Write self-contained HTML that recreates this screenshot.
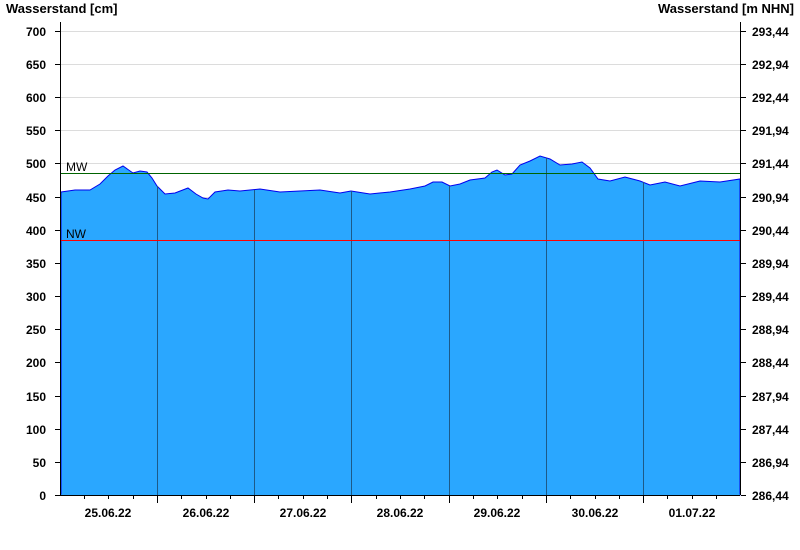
<!DOCTYPE html>
<html><head><style>body{margin:0;background:#fff}svg{display:block}text{font-family:"Liberation Sans",Arial,sans-serif;font-weight:bold;font-size:12px;fill:#000}</style></head><body>
<svg width="800" height="550" xmlns="http://www.w3.org/2000/svg">
<text x="6" y="13" style="font-size:13px">Wasserstand [cm]</text>
<text x="794" y="13" style="font-size:13px" text-anchor="end">Wasserstand [m NHN]</text>
<g stroke="#dcdcdc" stroke-width="1">
<line x1="61" x2="740" y1="31.5" y2="31.5"/><line x1="61" x2="740" y1="64.5" y2="64.5"/><line x1="61" x2="740" y1="97.5" y2="97.5"/><line x1="61" x2="740" y1="130.5" y2="130.5"/><line x1="61" x2="740" y1="163.5" y2="163.5"/><line x1="61" x2="740" y1="197.5" y2="197.5"/><line x1="61" x2="740" y1="230.5" y2="230.5"/>
</g>
<path d="M61,192 L75,190 L90,190 L100,184 L108,176 L115,170 L123,166 L133,173 L140,171 L147,172 L152,178 L157,186 L165,194 L175,193 L188,188 L196,194 L203,198 L208,199 L215,192 L228,190 L240,191 L260,189 L280,192 L300,191 L320,190 L340,193 L351,191 L370,194 L390,192 L410,189 L425,186 L433,182 L442,182 L450,186 L460,184 L470,180 L485,178 L492,172 L497,170 L505,175 L512,174 L520,165 L530,161 L540,156 L550,159 L560,165 L572,164 L582,162 L590,168 L598,179 L610,181 L625,177 L640,181 L650,185 L665,182 L680,186 L700,181 L720,182 L740,179 L740,495 L61,495 Z" fill="#2aa7ff" stroke="#0000ee" stroke-width="1"/>
<line x1="61" x2="740" y1="495" y2="495" stroke="#2aa7ff"/>
<g stroke="#1d5a87" stroke-width="1">
<line x1="157.5" x2="157.5" y1="186" y2="495"/><line x1="254.5" x2="254.5" y1="190" y2="495"/><line x1="351.5" x2="351.5" y1="191" y2="495"/><line x1="449.5" x2="449.5" y1="186" y2="495"/><line x1="546.5" x2="546.5" y1="158" y2="495"/><line x1="643.5" x2="643.5" y1="182" y2="495"/>
</g>
<line x1="61" x2="740" y1="173.5" y2="173.5" stroke="#006400"/>
<line x1="61" x2="740" y1="240.5" y2="240.5" stroke="#ff0000"/>
<text x="66" y="171" style="font-weight:normal">MW</text>
<text x="66" y="238" style="font-weight:normal">NW</text>
<g stroke="#000" stroke-width="1">
<line x1="60.5" x2="60.5" y1="22" y2="495"/><line x1="740.5" x2="740.5" y1="22" y2="495"/><line x1="55" x2="740" y1="495.5" y2="495.5"/>
</g>
<g stroke="#000">
<line x1="55" x2="60" y1="31.5" y2="31.5"/><line x1="55" x2="60" y1="64.5" y2="64.5"/><line x1="55" x2="60" y1="97.5" y2="97.5"/><line x1="55" x2="60" y1="130.5" y2="130.5"/><line x1="55" x2="60" y1="163.5" y2="163.5"/><line x1="55" x2="60" y1="197.5" y2="197.5"/><line x1="55" x2="60" y1="230.5" y2="230.5"/><line x1="55" x2="60" y1="263.5" y2="263.5"/><line x1="55" x2="60" y1="296.5" y2="296.5"/><line x1="55" x2="60" y1="329.5" y2="329.5"/><line x1="55" x2="60" y1="362.5" y2="362.5"/><line x1="55" x2="60" y1="396.5" y2="396.5"/><line x1="55" x2="60" y1="429.5" y2="429.5"/><line x1="55" x2="60" y1="462.5" y2="462.5"/>
<line x1="741" x2="746" y1="31.5" y2="31.5"/><line x1="741" x2="746" y1="64.5" y2="64.5"/><line x1="741" x2="746" y1="97.5" y2="97.5"/><line x1="741" x2="746" y1="130.5" y2="130.5"/><line x1="741" x2="746" y1="163.5" y2="163.5"/><line x1="741" x2="746" y1="197.5" y2="197.5"/><line x1="741" x2="746" y1="230.5" y2="230.5"/><line x1="741" x2="746" y1="263.5" y2="263.5"/><line x1="741" x2="746" y1="296.5" y2="296.5"/><line x1="741" x2="746" y1="329.5" y2="329.5"/><line x1="741" x2="746" y1="362.5" y2="362.5"/><line x1="741" x2="746" y1="396.5" y2="396.5"/><line x1="741" x2="746" y1="429.5" y2="429.5"/><line x1="741" x2="746" y1="462.5" y2="462.5"/><line x1="741" x2="746" y1="495.5" y2="495.5"/>
<line x1="157.5" x2="157.5" y1="495" y2="503"/><line x1="254.5" x2="254.5" y1="495" y2="503"/><line x1="351.5" x2="351.5" y1="495" y2="503"/><line x1="449.5" x2="449.5" y1="495" y2="503"/><line x1="546.5" x2="546.5" y1="495" y2="503"/><line x1="643.5" x2="643.5" y1="495" y2="503"/>
<line x1="84.5" x2="84.5" y1="495" y2="499"/><line x1="108.5" x2="108.5" y1="495" y2="499"/><line x1="133.5" x2="133.5" y1="495" y2="499"/>
<line x1="181.5" x2="181.5" y1="495" y2="499"/><line x1="206.5" x2="206.5" y1="495" y2="499"/><line x1="230.5" x2="230.5" y1="495" y2="499"/>
<line x1="278.5" x2="278.5" y1="495" y2="499"/><line x1="303.5" x2="303.5" y1="495" y2="499"/><line x1="327.5" x2="327.5" y1="495" y2="499"/>
<line x1="376.5" x2="376.5" y1="495" y2="499"/><line x1="400.5" x2="400.5" y1="495" y2="499"/><line x1="424.5" x2="424.5" y1="495" y2="499"/>
<line x1="473.5" x2="473.5" y1="495" y2="499"/><line x1="497.5" x2="497.5" y1="495" y2="499"/><line x1="522.5" x2="522.5" y1="495" y2="499"/>
<line x1="570.5" x2="570.5" y1="495" y2="499"/><line x1="595.5" x2="595.5" y1="495" y2="499"/><line x1="619.5" x2="619.5" y1="495" y2="499"/>
<line x1="667.5" x2="667.5" y1="495" y2="499"/><line x1="692.5" x2="692.5" y1="495" y2="499"/><line x1="716.5" x2="716.5" y1="495" y2="499"/>
</g>
<g text-anchor="end">
<text x="46" y="36">700</text><text x="46" y="69">650</text><text x="46" y="102">600</text><text x="46" y="135">550</text><text x="46" y="168">500</text><text x="46" y="202">450</text><text x="46" y="235">400</text><text x="46" y="268">350</text><text x="46" y="301">300</text><text x="46" y="334">250</text><text x="46" y="367">200</text><text x="46" y="401">150</text><text x="46" y="434">100</text><text x="46" y="467">50</text><text x="46" y="500">0</text>
</g>
<g>
<text x="752" y="36">293,44</text><text x="752" y="69">292,94</text><text x="752" y="102">292,44</text><text x="752" y="135">291,94</text><text x="752" y="168">291,44</text><text x="752" y="202">290,94</text><text x="752" y="235">290,44</text><text x="752" y="268">289,94</text><text x="752" y="301">289,44</text><text x="752" y="334">288,94</text><text x="752" y="367">288,44</text><text x="752" y="401">287,94</text><text x="752" y="434">287,44</text><text x="752" y="467">286,94</text><text x="752" y="500">286,44</text>
</g>
<g text-anchor="middle">
<text x="108" y="517">25.06.22</text><text x="206" y="517">26.06.22</text><text x="303" y="517">27.06.22</text><text x="400" y="517">28.06.22</text><text x="497" y="517">29.06.22</text><text x="595" y="517">30.06.22</text><text x="692" y="517">01.07.22</text>
</g>
</svg>
</body></html>
